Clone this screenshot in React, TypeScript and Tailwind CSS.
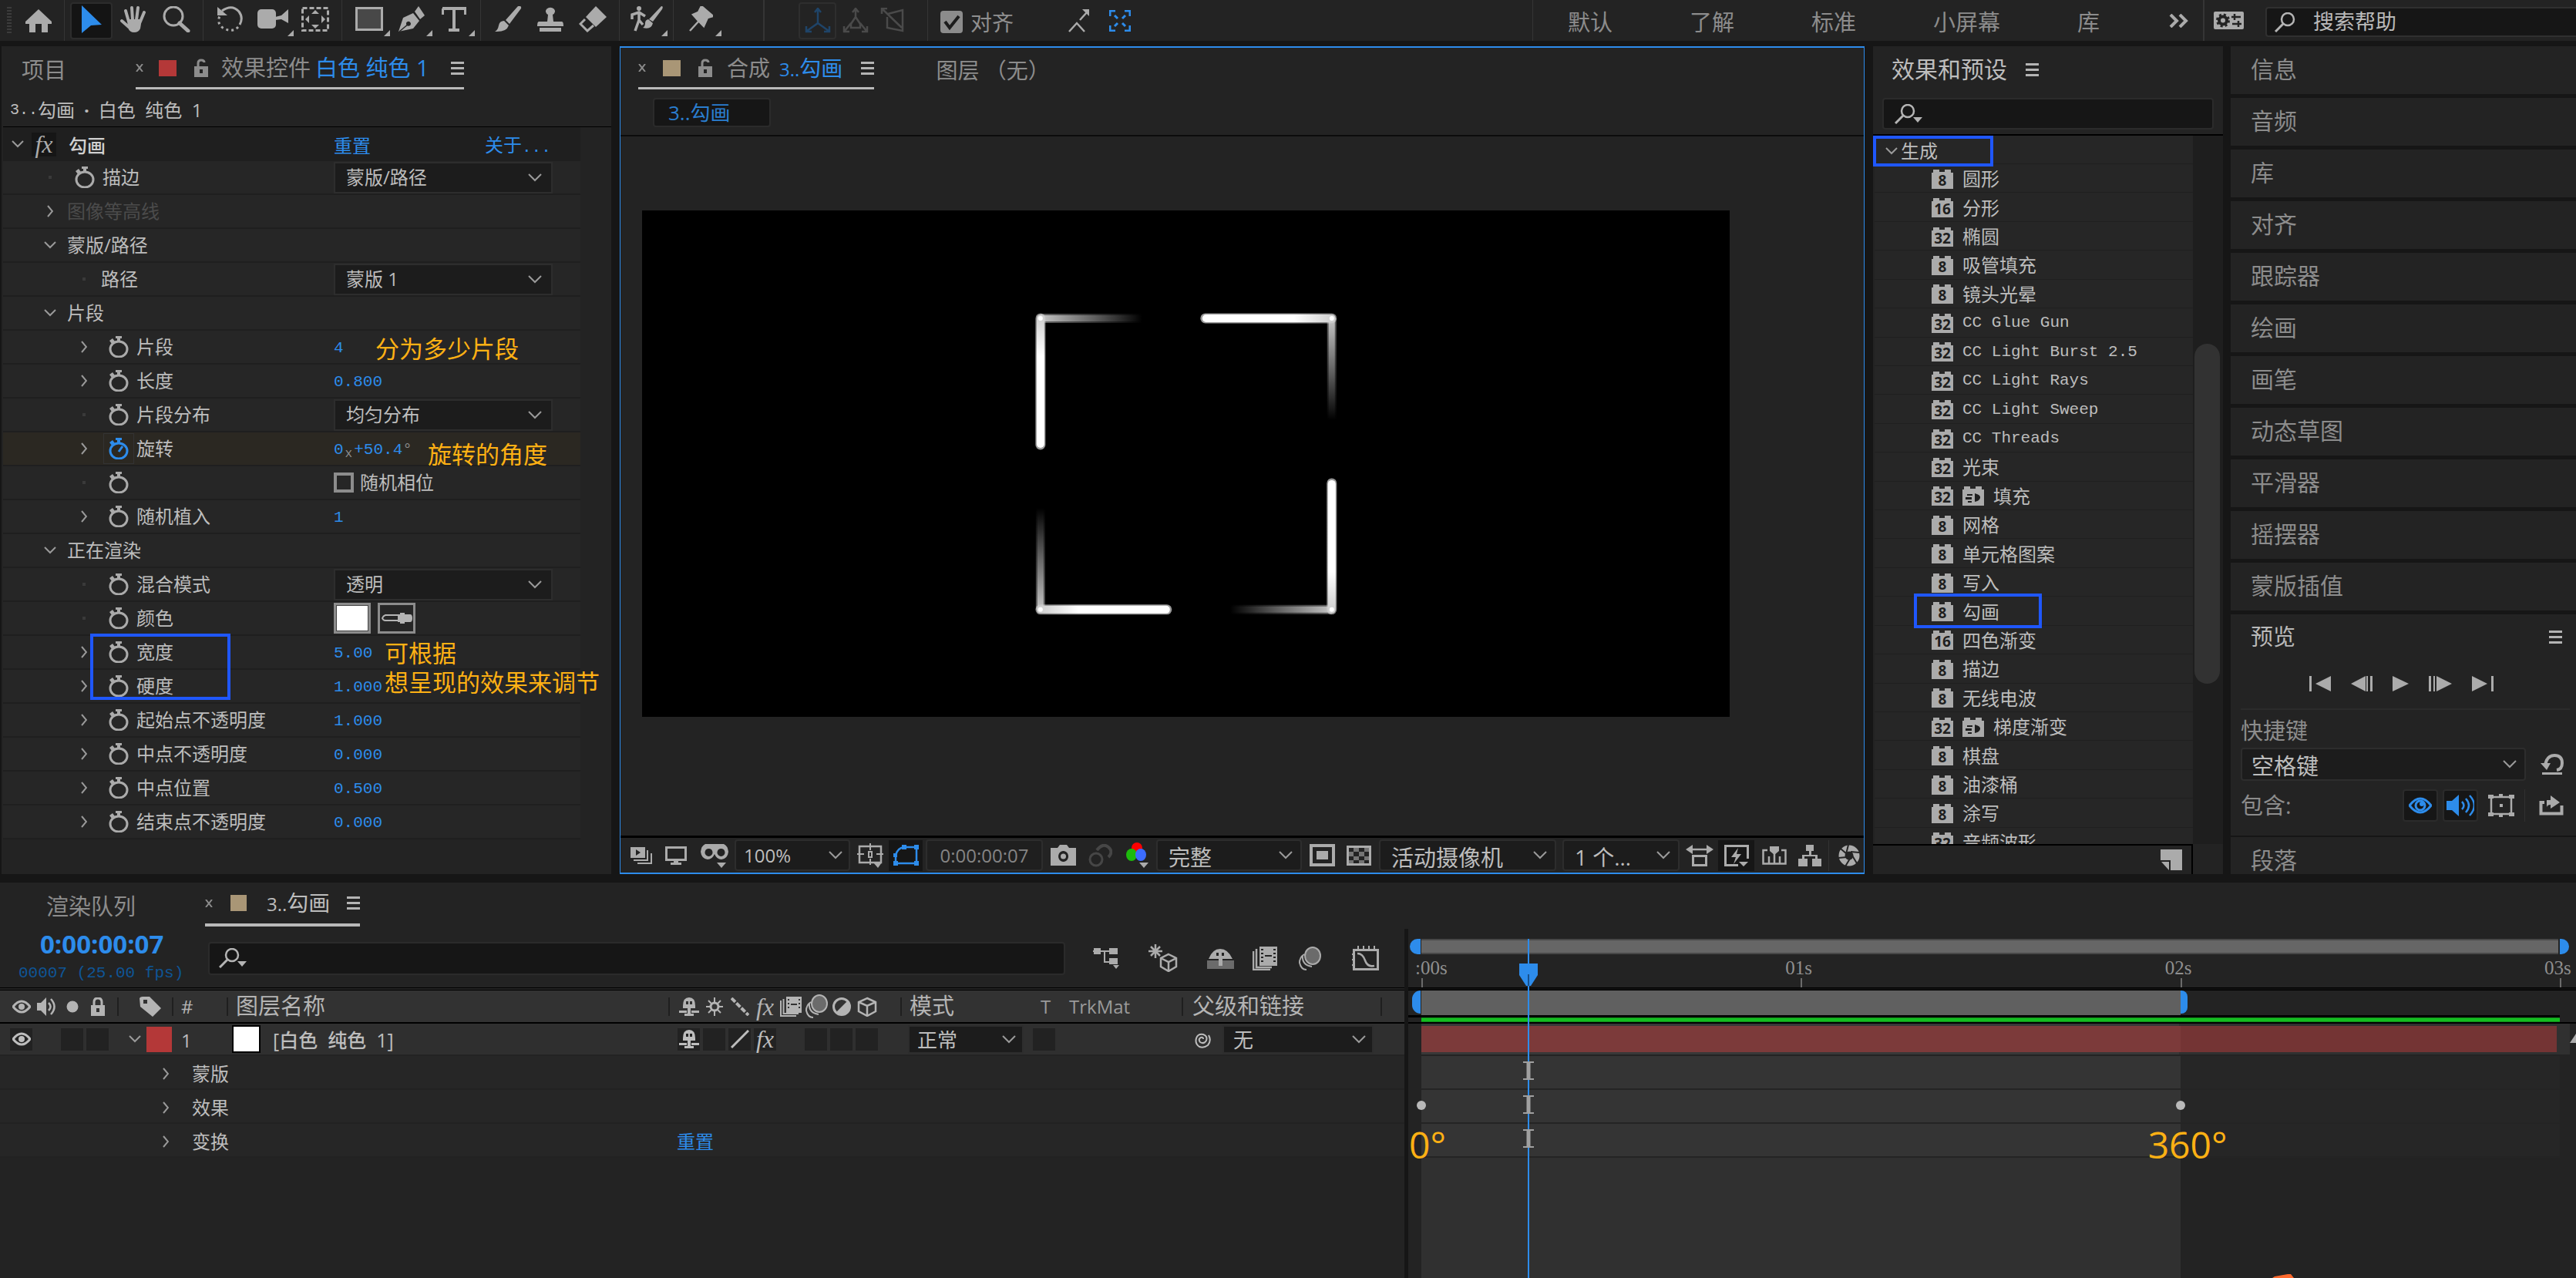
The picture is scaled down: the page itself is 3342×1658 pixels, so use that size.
import { Fragment } from 'react';
import type { ReactNode } from 'react';
import clsx from 'clsx';

const MONO = "font-['Liberation_Mono','Noto_Sans_CJK_SC',monospace]";

/* ---------- icons ---------- */

type IconProps = { w: number; h: number; children: ReactNode; className?: string };

const Icon = ({ w, h, children, className }: IconProps) => (
  <svg width={w} height={h} viewBox={`0 0 ${w} ${h}`} fill="currentColor" aria-hidden="true" className={clsx('shrink-0', className)}>
    {children}
  </svg>
);

const line = { fill: 'none', stroke: 'currentColor', strokeWidth: 2 } as const;

const ChevronDown = ({ className }: { className?: string }) => (
  <Icon w={18} h={11} className={className}><path d="M1 1 9 9 17 1" {...line} /></Icon>
);
const Twirl = ({ open }: { open?: boolean }) =>
  open
    ? <Icon w={16} h={10} className="text-[#9a9a9a]"><path d="M1 1 8 8 15 1" {...line} /></Icon>
    : <Icon w={8} h={16} className="text-[#9a9a9a]"><path d="M1 1 7 8 1 15" {...line} /></Icon>;

const Stopwatch = ({ on }: { on?: boolean }) => (
  <Icon w={26} h={28}>
    <ellipse cx="13" cy="17" rx="11" ry="10" {...line} strokeWidth={3} />
    <path d="M9 0h8v3h-2v4h-4V3H9zM1 6l4-3 3 4-4 3z" />
    {on && <path d="M13 18 18 11" {...line} strokeWidth={3} />}
  </Icon>
);
const Lock = ({ open }: { open?: boolean }) => (
  <Icon w={20} h={24}>
    <path d={open ? 'M6 11V6q0-4 4-4t4 3' : 'M5 11V6q0-5 5-5t5 5v5'} {...line} strokeWidth={3} />
    <path fillRule="evenodd" d="M1 10h18v14H1zM8 14h4v5H8z" />
  </Icon>
);
const Burger = () => (
  <Icon w={17} h={17} className="text-[#b4b4b4]"><path d="M0 0h17v3H0zM0 7h17v3H0zM0 14h17v3H0z" /></Icon>
);
const Cross = () => <Icon w={10} h={10} className="text-[#8c8c8c]"><path d="M1 0 9 10M9 0 1 10" {...line} /></Icon>;
const Corner = () => <Icon w={8} h={8} className="absolute right-0 bottom-1"><path d="M8 0V8H0z" /></Icon>;

const Search = ({ menu }: { menu?: boolean }) => (
  <Icon w={38} h={26} className="text-[#b4b4b4]">
    <ellipse cx="17" cy="9" rx="8" ry="8" {...line} strokeWidth={2.5} />
    <path d="M11 15 1 25" {...line} strokeWidth={3} />
    {menu && <path d="M24 17h12l-6 7z" />}
  </Icon>
);
const Eye = () => (
  <Icon w={24} h={18}>
    <path d="M1 9Q12-5 23 9 12 23 1 9z" {...line} strokeWidth={3} />
    <circle cx="12" cy="9" r="4" />
  </Icon>
);
const Speaker = ({ wide }: { wide?: boolean }) => (
  <Icon w={wide ? 36 : 26} h={wide ? 28 : 24}>
    <path d={wide ? 'M0 8h7L16 0V28L7 20H0z' : 'M0 7h5L12 0V24L5 17H0z'} />
    <path d={wide ? 'M20 9q5 5 0 10M25 5q8 9 0 18M30 1q12 13 0 26' : 'M15 7q5 5 0 10M18 2q9 10 0 20'} {...line} strokeWidth={2.5} />
  </Icon>
);
const Shy = () => (
  <Icon w={28} h={24}>
    <path fillRule="evenodd" d="M6 11Q6 0 14 0t8 11v3H6zM10 5v4h3V5zM15 5v4h3V5z" />
    <path d="M12 13h4v10h-4zM1 17h10v3H1zM17 17h10v3H17zM8 21h12v3H8z" />
  </Icon>
);
const Sun = () => (
  <Icon w={22} h={24}>
    <circle cx="11" cy="12" r="5" {...line} strokeWidth={3} />
    <path d="M11 0v6M11 18v6M0 12h5M17 12h5M3 4l4 4M15 16l4 4M19 4l-4 4M7 16l-4 4" {...line} />
  </Icon>
);
const Fx = () => <span aria-hidden="true" className="font-['Liberation_Serif',serif] text-[32px] leading-7 italic">fx</span>;
const Film = () => (
  <Icon w={32} h={31}>
    <path fillRule="evenodd" d="M9 0h23v25H9zM11 3v2h3V3zM11 8v2h3V8zM11 13v2h3v-2zM11 18v2h3v-2zM27 3v2h3V3zM27 8v2h3V8zM27 13v2h3v-2zM27 18v2h3v-2zM16 11v2h9v-2z" />
    <path d="M1 6v24h22M5 3v24h20" {...line} strokeWidth={2.5} />
  </Icon>
);
const Blur = () => (
  <Icon w={30} h={31}>
    <path d="M8 10q-6 4-6 11 2 9 9 9M6 12q-1 12 12 14" {...line} />
    <ellipse cx="19" cy="12" rx="10" ry="11" fill="#6b6b6b" stroke="currentColor" strokeWidth="2" />
  </Icon>
);
const Half = () => (
  <Icon w={24} h={24}>
    <circle cx="12" cy="12" r="10.500" {...line} strokeWidth={3} />
    <path d="M20 4A11 11 0 0 1 4 20z" />
  </Icon>
);
const Cube = () => (
  <Icon w={26} h={26}>
    <path d="M13 2 24 7v12l-11 6L2 19V7zM2 7l11 5 11-5M13 12v13" {...line} strokeWidth={2.500} />
  </Icon>
);

/* ---------- shared pieces ---------- */

type PickerProps = { label: string; options: string[]; className?: string; chevron?: string; pad?: string };

const Picker = ({ label, options, className, chevron = 'right-3', pad = 'pl-3.5' }: PickerProps) => (
  <span className={clsx('relative flex items-center border-2 border-[#2d2d2d] bg-[#1c1c1c]', className)}>
    <select aria-label={label} className={clsx('h-full w-full appearance-none truncate bg-transparent pr-8 text-[#bdbdbd] outline-none', pad)}>
      {options.map(o => <option key={o}>{o}</option>)}
    </select>
    <ChevronDown className={clsx('pointer-events-none absolute text-[#9a9a9a]', chevron)} />
  </span>
);

const Note = ({ children, className }: { children: ReactNode; className: string }) => (
  <p className={clsx('pointer-events-none absolute text-[31px] leading-9 whitespace-nowrap text-[#ffb114]', className)}>{children}</p>
);

/* ---------- top toolbar ---------- */

type Tool = { name: string; icon: ReactNode; menu?: boolean; active?: boolean };

const TOOL_GROUPS: Tool[][] = [
  [
    { name: '选取工具', active: true, icon: <Icon w={27} h={36} className="text-[#2d8ceb]"><path d="M1 0 27 25 13 26 1 36z" /></Icon> },
    {
      name: '手形工具',
      icon: (
        <Icon w={36} h={34}>
          <path d="M11 20 7 6M16 18 15 2M21 18 23 2M26 20 31 8M11 27 2 19" {...line} strokeWidth={4} strokeLinecap="round" />
          <path d="M9 17h19l-2 12q-2 5-8 5t-8-6z" />
        </Icon>
      ),
    },
    {
      name: '缩放工具',
      icon: <Icon w={36} h={34}><ellipse cx="14" cy="13" rx="12" ry="12" {...line} strokeWidth={3} /><path d="M22 22 33 32" {...line} strokeWidth={5} strokeLinecap="round" /></Icon>,
    },
  ],
  [
    {
      name: '旋转工具',
      icon: (
        <Icon w={36} h={34}>
          <path d="M7 6Q20-3 29 7q6 8 1 17" {...line} strokeWidth={3} />
          <path d="M28 27Q20 35 8 28 0 22 4 13" {...line} strokeWidth={3} strokeDasharray="3 4" />
          <path d="M1 1 14 12H1z" />
        </Icon>
      ),
    },
    {
      name: '统一摄像机工具',
      menu: true,
      icon: <Icon w={40} h={26}><rect width="24" height="25" rx="5" /><path d="M23 10 31 8 40 0V18L31 13 23 14z" /></Icon>,
    },
    {
      name: '向后平移工具',
      icon: (
        <Icon w={36} h={32}>
          <rect x="1.500" y="1.500" width="33" height="29" {...line} strokeWidth={3} strokeDasharray="6 3" />
          <path d="M18 4l5 5H13zM18 28l5-5H13zM5 16l5-5v10zM31 16l-5-5v10z" />
        </Icon>
      ),
    },
  ],
  [
    { name: '矩形工具', menu: true, icon: <Icon w={36} h={31}><rect x="1.500" y="1.500" width="33" height="28" fill="#484848" stroke="currentColor" strokeWidth="3" /></Icon> },
    {
      name: '钢笔工具',
      menu: true,
      icon: (
        <Icon w={34} h={34}>
          <path fillRule="evenodd" d="M0 33 6 15 19 9l8 10-8 10zM12 20a3 3 0 1 0 4 3 3 3 0 0 0-4-3z" />
          <path d="M21 7 26 0l8 12-6 5z" />
          <path d="M1 33 13 23" stroke="#232323" strokeWidth="1.500" />
        </Icon>
      ),
    },
    {
      name: '横排文字工具',
      menu: true,
      icon: <Icon w={32} h={32}><path d="M1 2h30v8M1 10V2M16 2v27M9 30h14" {...line} strokeWidth={4} /></Icon>,
    },
  ],
  [
    {
      name: '画笔工具',
      icon: <Icon w={36} h={34}><path d="M31 0q5-1 4 3L20 23l-5-5zM13 19l6 6q-3 9-18 8 4-2 5-8t7-6z" /></Icon>,
    },
    {
      name: '仿制图章工具',
      icon: <Icon w={34} h={32}><path d="M14 10a6 5 0 1 1 6 0l1 9h11q2 0 2 6H0q0-6 2-6h11zM3 27h28v5H3z" /></Icon>,
    },
    {
      name: '橡皮擦工具',
      icon: <Icon w={36} h={34}><path d="M22 0 36 14 22 27 9 14z" /><path d="M8 17 2 23l9 9 8-7" {...line} strokeWidth={3} /></Icon>,
    },
  ],
  [
    {
      name: 'Roto 笔刷工具',
      menu: true,
      icon: (
        <Icon w={42} h={34}>
          <circle cx="11" cy="3" r="3" />
          <path d="M11 7v12M2 17V11l9-3 8 5M11 18 6 32M11 18l5 6" {...line} strokeWidth={3.500} />
          <path d="M40 0q3 0 1 4L29 20l-5-3zM23 17l6 5q-2 9-13 6 3-2 3-6t4-5z" />
        </Icon>
      ),
    },
  ],
];

const PIN: Tool = {
  name: '人偶位置控点工具',
  menu: true,
  icon: <Icon w={32} h={34}><path d="M17 0 32 13 25 15 20 26 13 19 6 11 13 8zM13 20 2 32" stroke="currentColor" strokeWidth="2.500" /></Icon>,
};

const ToolButton = ({ tool }: { tool: Tool }) => (
  <button
    type="button"
    aria-label={tool.name}
    className={clsx('relative flex h-12 w-[55px] items-center justify-center pb-1', tool.active && 'rounded border-2 border-[#2c2c2c] bg-[#141414]')}
  >
    {tool.icon}
    {tool.menu && <Corner />}
  </button>
);

const AXES: { name: string; tone: string; d: string }[] = [
  { name: '本地轴模式', tone: 'text-[#1f4468]', d: 'M17 2V20L3 30M17 20 31 30M13 6l4-5 4 5M2 24v7h7M25 31h7v-7' },
  { name: '世界轴模式', tone: 'text-[#4a4a4a]', d: 'M17 2V14M11 20 3 30M23 20l8 10M13 6l4-5 4 5M2 24v7h7M25 31h7v-7M17 12l-6 9v5h12v-5z' },
  { name: '视图轴模式', tone: 'text-[#4a4a4a]', d: 'M3 2 28 26M2 8V1h7M10 8 29 3V30L9 26V12' },
];

const WORKSPACES = ['默认', '了解', '标准', '小屏幕', '库'];

const Toolbar = () => (
  <header className="flex h-[53px] items-center overflow-hidden bg-[#232323] text-[#ababab]">
    <div className="flex h-full w-[84px] shrink-0 items-center border-r border-[#353535] pl-[9px]">
      <span className="h-9 w-1.5 bg-[repeating-linear-gradient(#3c3c3c_0_2px,transparent_2px_4px)]" />
      <button type="button" aria-label="主页" className="ml-[18px]">
        <Icon w={34} h={30}><path d="M17 0 34 16v3H29V30H21V19H13V30H5V19H0V16z" /></Icon>
      </button>
    </div>
    {TOOL_GROUPS.map((g, i) => (
      <div key={i} className="flex h-full items-center border-r border-[#353535] px-[7px]">
        {g.map(t => <ToolButton key={t.name} tool={t} />)}
      </div>
    ))}
    <div className="flex h-full w-[118px] shrink-0 items-center border-r-2 border-[#353535] pl-[7px]"><ToolButton tool={PIN} /></div>
    <div className="ml-[44px] flex items-center">
      {AXES.map((a, i) => (
        <button key={a.name} type="button" aria-label={a.name} className={clsx('flex h-12 w-[49px] items-center justify-center', a.tone, i === 0 && 'rounded border-2 border-[#2e2e2e]')}>
          <Icon w={34} h={33}><path d={a.d} {...line} strokeWidth={2.500} /></Icon>
        </button>
      ))}
    </div>
    <label className="ml-5 flex h-full items-center gap-2.5 border-l border-[#353535] pt-1 pl-4 text-[28px]">
      <span className="relative flex">
        <input type="checkbox" defaultChecked className="h-[29px] w-[29px] appearance-none rounded-sm bg-[#8c8c8c]" />
        <Icon w={29} h={29} className="pointer-events-none absolute inset-0 text-[#1c1c1c]"><path d="M6 14 12 22 24 7" {...line} strokeWidth={4} /></Icon>
      </span>
      <span className="text-[#8f8f8f]">对齐</span>
    </label>
    <button type="button" aria-label="对齐选项" className="ml-[70px]">
      <Icon w={28} h={30}><path d="M19 0h9v9z" /><path d="M25 4 16 14M2 29 12 18 22 29" {...line} strokeWidth={2.500} /></Icon>
    </button>
    <button type="button" aria-label="捕捉" className="ml-[26px] text-[#2d8ceb]">
      <Icon w={28} h={28}>
        <path d="M1 8V1h7M20 1h7v7M27 20v7h-7M8 27H1v-7" {...line} strokeWidth={3} />
        <path d="M7 7 11 11M21 7 17 11M7 21 11 17M21 21 17 17" {...line} strokeWidth={3} />
      </Icon>
    </button>
    <nav className="ml-auto flex h-full items-center gap-[100px] border-l border-[#353535] pt-1 pl-[45px] text-[29px] text-[#8c8c8c]">
      {WORKSPACES.map(w => <button key={w} type="button">{w}</button>)}
    </nav>
    <button type="button" aria-label="更多工作区" className="ml-[90px] pr-[19px]">
      <Icon w={25} h={18}><path d="M2 1 10 9 2 17M14 1 22 9 14 17" {...line} strokeWidth={4} /></Icon>
    </button>
    <div className="flex h-full items-center border-l-2 border-[#353535] pl-3">
      <button type="button" aria-label="工作区设置">
        <Icon w={39} h={23}>
          <rect width="39" height="23" rx="2" />
          <circle cx="12" cy="11.500" r="5" fill="none" stroke="#232323" strokeWidth="4" />
          <circle cx="12" cy="11.500" r="7.500" fill="none" stroke="#232323" strokeWidth="3" strokeDasharray="3 3" />
          <path d="M23 7h12M24 16h12M27 3v8M32 12v8" stroke="#232323" strokeWidth="2.500" />
        </Icon>
      </button>
    </div>
    <label className="mt-1 ml-7 flex h-[39px] w-[403px] shrink-0 items-center gap-3 rounded-l border-2 border-r-0 border-[#303030] bg-[#161616] pl-2.5">
      <Search />
      <input aria-label="搜索帮助" placeholder="搜索帮助" className="w-full bg-transparent text-[27px] outline-none placeholder:text-[#b9b9b9]" />
    </label>
  </header>
);

/* ---------- effect controls ---------- */

type Prop = {
  name: string;
  level: 1 | 2;
  twirl?: 'open' | 'closed';
  watch?: boolean;
  keyed?: boolean;
  value?: string;
  options?: string[];
  dim?: boolean;
  control?: 'phase' | 'color';
};

const PROPS: Prop[] = [
  { name: '描边', level: 1, watch: true, options: ['蒙版/路径', '图像等高线'] },
  { name: '图像等高线', level: 1, twirl: 'closed', dim: true },
  { name: '蒙版/路径', level: 1, twirl: 'open' },
  { name: '路径', level: 2, options: ['蒙版 1'] },
  { name: '片段', level: 1, twirl: 'open' },
  { name: '片段', level: 2, twirl: 'closed', watch: true, value: '4' },
  { name: '长度', level: 2, twirl: 'closed', watch: true, value: '0.800' },
  { name: '片段分布', level: 2, watch: true, options: ['均匀分布', '成簇分布'] },
  { name: '旋转', level: 2, twirl: 'closed', watch: true, keyed: true, value: '+50.4' },
  { name: '', level: 2, watch: true, control: 'phase' },
  { name: '随机植入', level: 2, twirl: 'closed', watch: true, value: '1' },
  { name: '正在渲染', level: 1, twirl: 'open' },
  { name: '混合模式', level: 2, watch: true, options: ['透明', '上面', '下面', '模板'] },
  { name: '颜色', level: 2, watch: true, control: 'color' },
  { name: '宽度', level: 2, twirl: 'closed', watch: true, value: '5.00' },
  { name: '硬度', level: 2, twirl: 'closed', watch: true, value: '1.000' },
  { name: '起始点不透明度', level: 2, twirl: 'closed', watch: true, value: '1.000' },
  { name: '中点不透明度', level: 2, twirl: 'closed', watch: true, value: '0.000' },
  { name: '中点位置', level: 2, twirl: 'closed', watch: true, value: '0.500' },
  { name: '结束点不透明度', level: 2, twirl: 'closed', watch: true, value: '0.000' },
];

const PropRow = ({ p }: { p: Prop }) => (
  <div className={clsx('flex h-11 items-center border-b-2 border-[#1f1f1f]', p.keyed ? 'bg-[#2b2822]' : 'bg-[#262626]')}>
    <div className={clsx('flex w-[429px] shrink-0 items-center', p.level === 1 ? 'pl-[49px]' : 'pl-[93px]')}>
      <span className="flex w-6 justify-center">
        {p.twirl ? <button type="button" aria-label={`展开 ${p.name}`} className="flex"><Twirl open={p.twirl === 'open'} /></button> : <span className="h-1 w-1 bg-[#3a3a3a]" />}
      </span>
      {p.watch && (
        <button
          type="button"
          aria-label={`时间变化秒表 ${p.name}`}
          className={clsx('ml-[13px] flex h-10 w-10 items-center justify-center', p.keyed ? 'border border-[#333] text-[#2d8ceb]' : 'text-[#ababab]')}
        >
          <Stopwatch on={p.keyed} />
        </button>
      )}
      <span className={clsx('whitespace-nowrap', p.watch ? 'ml-[3px]' : 'ml-2.5', p.dim && 'text-[#4b4b4b]')}>{p.name}</span>
    </div>
    {p.options && <Picker label={p.name} options={p.options} className="h-[41px] w-[284px]" />}
    {p.value && (
      <button type="button" className={clsx('pt-1 text-[21px] text-[#2d8ceb]', MONO)}>
        {p.keyed && <>0<sub className="px-0.5 text-base text-[#8c8c8c]">x</sub></>}
        {p.value}
        {p.keyed && <span className="text-[#8c8c8c]">°</span>}
      </button>
    )}
    {p.control === 'phase' && (
      <label className="flex items-center gap-2">
        <input type="checkbox" className="h-[26px] w-[26px] appearance-none border-4 border-[#8c8c8c]" />
        随机相位
      </label>
    )}
    {p.control === 'color' && (
      <div className="flex gap-[9px]">
        <button type="button" aria-label="颜色" className="h-10 w-12 border-4 border-[#8c8c8c] bg-white outline-1 -outline-offset-4 outline-[#444]" />
        <button type="button" aria-label="吸管" className="flex h-10 w-[49px] items-center justify-center border-[3px] border-[#8c8c8c] text-[#b4b4b4]">
          <Icon w={40} h={14}><path d="M22 3H5Q2 4 1 7 2 10 5 10H22" {...line} /><path d="M21 2h3V0h6v2h7q3 0 3 5t-3 5h-7v2h-6v-2h-3z" /></Icon>
        </button>
      </div>
    )}
  </div>
);

const EffectControls = () => (
  <section className="relative w-[791px] shrink-0 bg-[#232323] text-2xl text-[#bdbdbd]">
    <div className="flex h-14 items-end pl-[26px] text-[29px] leading-[50px]">
      <button type="button" className="text-[#8c8c8c]">项目</button>
      <div className="ml-[90px] flex items-center border-b-[3px] border-[#b9b9b9] whitespace-nowrap text-[#8c8c8c]">
        <button type="button" aria-label="关闭" className="mr-5"><Cross /></button>
        <span className="mr-[22px] h-[21px] w-[23px] bg-[#b43838]" />
        <Lock open />
        <span className="ml-4">效果控件</span>
        <span className="mr-7 ml-[6px] text-[#2d8ceb]">白色 纯色 1</span>
        <button type="button" aria-label="面板菜单"><Burger /></button>
      </div>
    </div>
    <p className="ml-0.5 flex h-[49px] items-center border-b border-black pt-1.5 pl-[9px]"><span className={clsx('text-xl', MONO)}>3..</span>勾画<span className="px-3 font-bold">·</span>白色&nbsp; 纯色&nbsp; 1</p>
    <div className="ml-0.5 w-[749px]">
      <div className="flex h-11 items-center bg-[#1f1f1f]">
        <span className="flex w-[37px] justify-center"><Twirl open /></span>
        <span className="flex h-[31px] w-8 items-center justify-center bg-[#161616] text-[#ababab]"><Fx /></span>
        <span className="ml-4 w-[344px] pt-1 font-medium text-[#d0d0d0]">勾画</span>
        <button type="button" className="w-[196px] pt-1 text-left text-[#2d8ceb]">重置</button>
        <button type="button" className="pt-1 text-[#2d8ceb]">关于<span className={clsx('text-[21px]', MONO)}>...</span></button>
      </div>
      {PROPS.map((p, i) => <PropRow key={i} p={p} />)}
    </div>
    <Note className="top-[374px] left-[485px]">分为多少片段</Note>
    <Note className="top-[511px] left-[553px]">旋转的角度</Note>
    <Note className="top-[769px] left-[497px]">可根据</Note>
    <Note className="top-[807px] left-[497px]">想呈现的效果来调节</Note>
    <span className="pointer-events-none absolute top-[762px] left-[115px] h-[86px] w-[182px] border-4 border-[#1f57ff]" />
  </section>
);

/* ---------- composition viewer ---------- */

const StrokeSegment = ({ turn }: { turn: number }) => (
  <g transform={`rotate(${turn} 706 329)`} fill="none" strokeLinecap="round">
    <path d="M895 140V272" stroke="url(#tail)" strokeWidth="12" strokeLinecap="butt" opacity=".5" />
    <path d="M895 140V272" stroke="url(#tail)" strokeWidth="8" strokeLinecap="butt" />
    <path d="M731 140H895" stroke="url(#head)" strokeWidth="13" opacity=".6" />
    <path d="M732 140H895" stroke="url(#head)" strokeWidth="10" />
    <circle cx="895" cy="140" r="3" fill="#fff" />
  </g>
);

const FooterIcon = ({ name, className, children }: { name: string; className: string; children: ReactNode }) => (
  <button type="button" aria-label={name} className={clsx('flex h-10 shrink-0 items-center justify-center', className)}>{children}</button>
);

const Viewer = () => (
  <section className="ml-[11px] flex min-w-0 flex-1 flex-col border border-y-2 border-[#2d8ceb] bg-[#232323]">
    <div className="flex h-[54px] items-end pl-[23px] text-[28px] leading-[50px] text-[#8c8c8c]">
      <div className="flex items-center border-b-[3px] border-[#b9b9b9] whitespace-nowrap">
        <button type="button" aria-label="关闭" className="mr-[22px]"><Cross /></button>
        <span className="mr-[22px] h-[21px] w-[23px] bg-[#a99676]" />
        <Lock open />
        <span className="ml-[18px]">合成</span>
        <span className="mr-6 ml-3 text-[#2d8ceb]"><span className="text-2xl">3..</span>勾画</span>
        <button type="button" aria-label="面板菜单"><Burger /></button>
      </div>
      <button type="button" className="ml-20">图层 （无）</button>
    </div>
    <div className="flex h-[61px] items-center border-b-2 border-[#0c0c0c] pl-[42px]">
      <button type="button" className="h-[38px] w-[153px] rounded border-2 border-[#2b2b2b] bg-[#161616] pl-[18px] text-left text-[26px] leading-[34px] text-[#2a7ed0]">3..勾画</button>
    </div>
    <div className="flex-1 pt-24 pl-7">
      <svg viewBox="0 0 1411 657" role="img" aria-label="合成预览" className="h-auto w-[89%] bg-black">
        <defs>
          <linearGradient id="head" gradientUnits="userSpaceOnUse" x1="731" y1="0" x2="895" y2="0">
            <stop offset=".7" stopColor="#fff" />
            <stop offset="1" stopColor="#d0d0d0" />
          </linearGradient>
          <linearGradient id="tail" gradientUnits="userSpaceOnUse" x1="0" y1="140" x2="0" y2="272">
            <stop offset="0" stopColor="#c4c4c4" />
            <stop offset=".5" stopColor="#666" />
            <stop offset="1" stopColor="#000" />
          </linearGradient>
        </defs>
        {[0, 90, 180, 270].map(t => <StrokeSegment key={t} turn={t} />)}
      </svg>
    </div>
    <footer className="flex h-12 items-center border-t-[3px] border-black pl-2 text-[#ababab]">
      <FooterIcon name="始终预览此视图" className="w-[38px]">
        <Icon w={28} h={22}><path fillRule="evenodd" d="M0 0h19v14H0zM7 3v8l6-4z" /><path d="M22 4v13H4M27 8v13H9" {...line} /></Icon>
      </FooterIcon>
      <FooterIcon name="主查看器" className="ml-2 w-9">
        <Icon w={28} h={24}><rect x="1.500" y="1.500" width="25" height="16" {...line} strokeWidth={3} /><path d="M11 18h6v3h4v3H7v-3h4z" /></Icon>
      </FooterIcon>
      <FooterIcon name="Adobe 沉浸式环境" className="ml-3.5 w-9">
        <Icon w={36} h={32}><path fillRule="evenodd" d="M6 1h24q5 2 6 10-1 9-9 10-6 0-9-7-3 7-9 7-8-1-9-10Q1 3 6 1zM10 7a5 5 0 1 0 1 0zM26 7a5 5 0 1 0 1 0z" /><path d="M21 25h12l-6 7z" /></Icon>
      </FooterIcon>
      <Picker label="放大率" options={['100%', '50%', '200%']} className="ml-2 h-[41px] w-[150px] rounded text-2xl" chevron="right-2" pad="pl-2.5" />
      <FooterIcon name="网格和参考线" className="ml-2 w-9">
        <Icon w={34} h={32}><rect x="3" y="4" width="28" height="21" {...line} strokeWidth={2.500} /><path d="M17 0v9M17 20v8M0 14h9M25 14h9M15 11h4v7h-4z" {...line} /><path d="M21 25h11l-5 7z" /></Icon>
      </FooterIcon>
      <FooterIcon name="蒙版可见性" className="ml-1.5 w-11 bg-[#161616] text-[#2d8ceb]">
        <Icon w={33} h={29}><path d="M3 25V15Q5 5 14 4H30V25z" {...line} strokeWidth={2.500} /><path d="M11 1h6v6h-6zM27 1h6v6h-6zM0 22h6v6H0zM27 22h6v6h-6zM0 12h5v5H0z" /></Icon>
      </FooterIcon>
      <button type="button" className="ml-1 h-[41px] w-[152px] rounded border-2 border-[#2d2d2d] bg-[#1f1f1f] text-2xl leading-8 text-[#848484]">0:00:00:07</button>
      <FooterIcon name="快照" className="ml-2 w-9">
        <Icon w={33} h={27}><path fillRule="evenodd" d="M0 4h9l3-4h9l3 4h9v23H0zM16.500 8a6.500 7 0 1 0 .1 0z" /><circle cx="16.500" cy="15" r="3.500" /></Icon>
      </FooterIcon>
      <FooterIcon name="显示快照" className="ml-[11px] w-9 text-[#464646]">
        <Icon w={34} h={30}><circle cx="13" cy="20" r="8" {...line} strokeWidth={3} /><path d="M14 8q8-10 15-4t0 13" {...line} strokeWidth={4} /></Icon>
      </FooterIcon>
      <FooterIcon name="通道" className="ml-4 w-8">
        <Icon w={32} h={33}><ellipse cx="15" cy="7" rx="7" ry="7" fill="#f00" /><ellipse cx="8" cy="16" rx="7" ry="8" fill="#1dbb0c" /><ellipse cx="20" cy="16" rx="7" ry="8" fill="#3c6cff" /><path d="M18 26h12l-6 7z" /></Icon>
      </FooterIcon>
      <Picker label="分辨率" options={['完整', '二分之一', '四分之一']} className="ml-2 h-[41px] w-[189px] rounded text-[28px]" chevron="right-2.5" />
      <FooterIcon name="目标区域" className="ml-2 w-9">
        <Icon w={33} h={29}><rect x="2" y="2" width="29" height="25" {...line} strokeWidth={4} /><rect x="9" y="9" width="15" height="11" /></Icon>
      </FooterIcon>
      <FooterIcon name="透明网格" className="ml-3 w-9">
        <Icon w={32} h={26}>
          <rect x="1.500" y="1.500" width="29" height="23" {...line} strokeWidth={3} />
          <path d="M9 3h7v5H9zM23 3h7v5h-7zM3 8h6v6H3zM16 8h7v6h-7zM9 14h7v5H9zM23 14h7v5h-7zM3 19h6v5H3zM16 19h7v5h-7z" opacity=".6" />
        </Icon>
      </FooterIcon>
      <Picker label="3D 视图" options={['活动摄像机', '正面', '自定义视图 1']} className="ml-2 h-[41px] w-[230px] rounded text-[29px]" chevron="right-2.5" />
      <Picker label="视图布局" options={['1 个…', '2 个视图', '4 个视图']} className="ml-2 h-[41px] w-[152px] rounded text-[28px]" chevron="right-2.5" />
      <FooterIcon name="像素长宽比校正" className="ml-2 w-9">
        <Icon w={36} h={28}><path d="M4 6h28" stroke="currentColor" strokeWidth="2.500" /><path d="M0 6 9 0v12zM36 6l-9-6v12z" /><rect x="9.500" y="14.500" width="17" height="12" {...line} strokeWidth={3} /></Icon>
      </FooterIcon>
      <FooterIcon name="快速预览" className="ml-1.5 w-[47px] bg-[#161616]">
        <Icon w={32} h={28}><path d="M18 26.500H1.500v-25h29V18" {...line} strokeWidth={3} /><path d="M18 4 9 16h6l-3 9 10-13h-6zM19 22h12l-6 6z" /></Icon>
      </FooterIcon>
      <FooterIcon name="时间轴" className="ml-2 w-9">
        <Icon w={32} h={24}><path d="M7 5H1.500v17.500h29V5H25M9 22V13M16 22V6M23 22V13" {...line} strokeWidth={2.500} /><path d="M10 0h12v6l-6 5-6-5z" /></Icon>
      </FooterIcon>
      <FooterIcon name="合成流程图" className="ml-2.5 w-9">
        <Icon w={30} h={28}><path d="M10 0h10v8H10zM0 18h12v10H0zM18 18h12v10H18zM14 8h3v5h8v5h-3v-3H8v3H5v-5h9z" /></Icon>
      </FooterIcon>
      <span className="ml-1.5 h-10 w-px bg-[#333]" />
      <FooterIcon name="重置曝光度" className="ml-2.5 w-8">
        <Icon w={28} h={28}><circle cx="14" cy="14" r="9.500" {...line} strokeWidth={8} /><path d="M13 0 10 12M27 10 16 9M24 24 18 14M9 28 15 18M0 17l11-1M3 5l8 7" stroke="#232323" strokeWidth="2" /></Icon>
      </FooterIcon>
    </footer>
  </section>
);

/* ---------- effects & presets ---------- */

type Effect = { bits: '8' | '16' | '32'; name: string; gpu?: boolean; latin?: boolean };

const EFFECTS: Effect[] = [
  { bits: '8', name: '圆形' },
  { bits: '16', name: '分形' },
  { bits: '32', name: '椭圆' },
  { bits: '8', name: '吸管填充' },
  { bits: '8', name: '镜头光晕' },
  { bits: '32', name: 'CC Glue Gun', latin: true },
  { bits: '32', name: 'CC Light Burst 2.5', latin: true },
  { bits: '32', name: 'CC Light Rays', latin: true },
  { bits: '32', name: 'CC Light Sweep', latin: true },
  { bits: '32', name: 'CC Threads', latin: true },
  { bits: '32', name: '光束' },
  { bits: '32', name: '填充', gpu: true },
  { bits: '8', name: '网格' },
  { bits: '8', name: '单元格图案' },
  { bits: '8', name: '写入' },
  { bits: '8', name: '勾画' },
  { bits: '16', name: '四色渐变' },
  { bits: '8', name: '描边' },
  { bits: '8', name: '无线电波' },
  { bits: '32', name: '梯度渐变', gpu: true },
  { bits: '8', name: '棋盘' },
  { bits: '8', name: '油漆桶' },
  { bits: '8', name: '涂写' },
  { bits: '32', name: '音频波形' },
];

const Plug = ({ bits }: { bits?: string }) => (
  <Icon w={28} h={33} className="mr-3 text-[#ababab]">
    <path d="M2 4h8v3h7V4h8v4h3v21H0V8h2z" />
    {bits
      ? <text x="14" y="25" textAnchor="middle" fontSize="19" fontWeight="700" fill="#1f1f1f" fontFamily="Open Sans, sans-serif">{bits}</text>
      : <path d="M6 14h7v2H6zM4 18h8v3H4zM7 23h5v2H7zM16 13q8 2 7 6-1 4-7 5z" fill="#1f1f1f" />}
  </Icon>
);

const Presets = () => (
  <section className="relative ml-[11px] flex w-[454px] shrink-0 flex-col bg-[#232323] text-2xl text-[#bdbdbd]">
    <div className="flex h-[60px] items-center pl-6 text-[30px]">
      <h2>效果和预设</h2>
      <button type="button" aria-label="面板菜单" className="ml-6"><Burger /></button>
    </div>
    <label className="mx-3 mt-[7px] flex h-[41px] items-center rounded border-2 border-[#2b2b2b] bg-[#161616] pl-3.5">
      <Search menu />
      <input aria-label="搜索效果" className="w-full bg-transparent outline-none" />
    </label>
    <div className="mt-1.5 flex min-h-0 flex-1 overflow-hidden border-t-2 border-black">
      <div className="h-0 flex-1 pl-0.5">
        <button type="button" className="flex h-9 w-full items-center gap-1 bg-[#262626] pt-1 pl-3.5 whitespace-nowrap"><Twirl open />生成</button>
        <ul className="flex h-[898px] flex-col">
          {EFFECTS.map(e => (
            <li key={e.name} className="flex min-h-0 flex-1 items-center border-t border-[#1f1f1f] bg-[#262626] pt-0.5 pl-[74px] whitespace-nowrap">
              <Plug bits={e.bits} />
              {e.gpu && <Plug />}
              <span className={clsx('leading-8', e.latin && ['text-[21px]', MONO])}>{e.name}</span>
            </li>
          ))}
        </ul>
      </div>
      <div className="w-[39px] bg-[#1e1e1e] pt-[270px] pl-0.5">
        <div className="h-[441px] w-[33px] rounded-full bg-[#323232]" />
      </div>
    </div>
    <div className="flex h-[39px] w-[415px] items-center justify-end border-t-2 border-r-2 border-black pr-3 text-[#ababab]">
      <button type="button" aria-label="新建动画预设"><Icon w={28} h={27}><path d="M0 0h28v27H13V14H0zM1 16h10v11z" /></Icon></button>
    </div>
    <span className="pointer-events-none absolute top-[116px] left-0 h-10 w-[156px] border-4 border-[#1f57ff]" />
    <span className="pointer-events-none absolute top-[710px] left-[53px] h-[45px] w-[166px] border-4 border-[#1f57ff]" />
  </section>
);

/* ---------- right column ---------- */

const PANELS = ['信息', '音频', '库', '对齐', '跟踪器', '绘画', '画笔', '动态草图', '平滑器', '摇摆器', '蒙版插值'];

const TRANSPORT: { name: string; w: number; d: string }[] = [
  { name: '第一帧', w: 28, d: 'M0 0h3v20H0zM28 0v20L8 10z' },
  { name: '上一帧', w: 28, d: 'M19 0v20L0 10zM20 0h2v20h-2zM25 0h3v20h-3z' },
  { name: '播放', w: 21, d: 'M0 0 21 10 0 20z' },
  { name: '下一帧', w: 30, d: 'M0 0h3v20H0zM6 0h2v20H6zM10 0 30 10 10 20z' },
  { name: '最后一帧', w: 28, d: 'M0 0 20 10 0 20zM25 0h3v20h-3z' },
];

const SidePanels = () => (
  <aside className="ml-2.5 flex w-[448px] shrink-0 flex-col text-[30px] text-[#8c8c8c]">
    {PANELS.map(p => (
      <button key={p} type="button" className="mb-[5px] h-[62px] bg-[#232323] pb-1 pl-[26px] text-left">{p}</button>
    ))}
    <div className="flex h-[287px] flex-col bg-[#232323] text-[29px]">
      <div className="flex h-[58px] shrink-0 items-center justify-between pr-[18px] pl-[26px] text-[#b9b9b9]">
        <h2>预览</h2>
        <button type="button" aria-label="面板菜单"><Burger /></button>
      </div>
      <div className="flex h-16 shrink-0 items-center justify-center gap-[26px] pr-1.5 text-[#ababab]">
        {TRANSPORT.map(t => (
          <button key={t.name} type="button" aria-label={t.name}><Icon w={t.w} h={20}><path d={t.d} /></Icon></button>
        ))}
      </div>
      <div className="mr-2 ml-[13px] border-t-2 border-[#2b2b2b]">
        <label htmlFor="shortcut" className="mt-1.5 block h-[43px] leading-[42px]">快捷键</label>
        <div className="flex items-center justify-between">
          <span className="relative flex h-[43px] w-[370px] items-center rounded border-2 border-[#2d2d2d] bg-[#1c1c1c]">
            <select id="shortcut" className="h-full w-full appearance-none bg-transparent pl-3 text-[#bdbdbd] outline-none">
              <option>空格键</option>
              <option>Shift+空格键</option>
            </select>
            <ChevronDown className="pointer-events-none absolute right-2.5 text-[#9a9a9a]" />
          </span>
          <button type="button" aria-label="重置" className="pr-2 text-[#ababab]">
            <Icon w={30} h={28}><path d="M6 15Q8 2 18 2t10 10q0 8-7 9" {...line} strokeWidth={4} /><path d="M0 12h13l-5 9zM2 24h26v3H2z" /></Icon>
          </button>
        </div>
        <div className="mt-2.5 flex items-center">
          <span className="mr-auto">包含:</span>
          <button type="button" aria-label="包含视频" className="mr-1.5 flex h-[42px] w-[46px] items-center justify-center rounded border-2 border-[#2b2b2b] bg-[#161616] text-[#2d8ceb]">
            <Icon w={30} h={22}><path d="M1 11Q15-7 29 11 15 29 1 11z" {...line} strokeWidth={3} /><circle cx="15" cy="11" r="6" {...line} strokeWidth={3} /><circle cx="17" cy="9" r="3" /></Icon>
          </button>
          <button type="button" aria-label="包含音频" className="flex h-[42px] w-[46px] items-center justify-center rounded border-2 border-[#2b2b2b] bg-[#161616] text-[#2d8ceb]"><Speaker wide /></button>
          <button type="button" aria-label="包含叠加" className="mx-[13px] text-[#ababab]">
            <Icon w={34} h={30}><rect x="4" y="4" width="26" height="22" {...line} strokeWidth={2.500} /><path d="M0 1h7v5H0zM27 1h7v5h-7zM0 24h7v5H0zM27 24h7v5h-7zM15 13h4v4h-4zM14 0h5v4h-5zM14 26h5v4h-5z" /></Icon>
          </button>
          <button type="button" aria-label="循环选项" className="border-l border-[#303030] py-2 pr-2 pl-[18px] text-[#ababab]">
            <Icon w={32} h={26}><path d="M7 9H2.500V23.500H29.500V13" {...line} strokeWidth={4} /><path d="M10 15V6h5V0L27 9 15 17v-5q-4 0-5 3z" /></Icon>
          </button>
        </div>
      </div>
    </div>
    <button type="button" className="mt-0.5 h-12 bg-[#232323] pt-3 pl-[26px] text-left leading-9">段落</button>
  </aside>
);

/* ---------- timeline ---------- */

const Box = ({ children, empty }: { children?: ReactNode; empty?: boolean }) => (
  <span className="flex w-[33px] justify-center">
    <span className={clsx('flex h-[29px] w-[29px] items-center justify-center', !empty && 'bg-[#222]')}>{children}</span>
  </span>
);
const Cell = ({ children, className }: { children?: ReactNode; className: string }) => (
  <div className={clsx('flex shrink-0 items-center', className)}>{children}</div>
);
const Divider = () => <span className="h-6 w-0.5 bg-[#1f1f1f]" />;

const SWITCHES: ReactNode[] = [
  <Shy />,
  <Sun />,
  <Icon w={24} h={24}><path d="M1 1 23 23" {...line} strokeWidth={4} strokeDasharray="7 2" /></Icon>,
  <Fx />,
  <Icon w={28} h={26}><path fillRule="evenodd" d="M8 0h20v21H8zM10 3v2h2V3zM10 8v2h2V8zM10 13v2h2v-2zM24 3v2h2V3zM24 8v2h2V8zM24 13v2h2v-2zM14 9v2h8V9z" /><path d="M1 5v20h20M4.500 3v19H24" {...line} /></Icon>,
  <Blur />,
  <Half />,
  <Cube />,
];

const Outline = () => (
  <div className="w-[1822px] shrink-0 text-2xl text-[#bdbdbd]">
    <div className="flex h-[76px] items-center">
      <div className="w-[270px] pl-6">
        <p className="pl-7 text-[33px] leading-9 font-bold text-[#2d8ceb]">0:00:00:07</p>
        <p className={clsx('pt-1 text-[21px] leading-8 text-[#0f5596]', MONO)}>00007 (25.00 fps)</p>
      </div>
      <label className="flex h-[43px] w-[1112px] items-center rounded border-2 border-[#2b2b2b] bg-[#161616] pl-3">
        <Search menu />
        <input aria-label="搜索图层" className="w-full bg-transparent outline-none" />
      </label>
      <div className="ml-[34px] flex items-center text-[#ababab]">
        <button type="button" aria-label="合成微型流程图" className="w-[74px]">
          <Icon w={36} h={28}><path d="M2 5h24M17 5v14h8" {...line} /><path d="M3 1h9v8H3zM23 1h11v8H23zM23 14h11v8H23zM28 23h8l-4 5z" /></Icon>
        </button>
        <button type="button" aria-label="草图 3D" className="w-[76px]">
          <Icon w={38} h={36}><path d="M26 13 36 18v11l-10 6-10-6V18zM16 18l10 5 10-5M26 23v12" {...line} strokeWidth={2.500} /><path d="M9 0v18M0 9h18M3 3l12 12M15 3 3 15" {...line} strokeWidth={2.500} /></Icon>
        </button>
        <button type="button" aria-label="隐藏消隐图层" className="w-[59px]">
          <Icon w={35} h={27}><path d="M0 16h35v11H0z" fill="#6b6b6b" /><path fillRule="evenodd" d="M2 14Q7 1 17 1t16 13zM12 6v4h3V6zM19 6v4h3V6z" /><path d="M15 13h5v10h-5z" /></Icon>
        </button>
        <button type="button" aria-label="帧混合" className="w-[59px]"><Film /></button>
        <button type="button" aria-label="运动模糊" className="w-[70px]"><Blur /></button>
        <button type="button" aria-label="图表编辑器">
          <Icon w={35} h={32}><rect x="2.500" y="5.500" width="31" height="25" {...line} strokeWidth={3} /><path d="M8 0v4M15 0v4M22 0v4M29 0v4M0 11h3M0 18h3M0 25h3" {...line} /><path d="M7 10q7 0 10 9t12 7" {...line} strokeWidth={2.500} /></Icon>
        </button>
      </div>
    </div>
    <div className="h-1 border-y border-black" />
    <div className="flex h-[43px] items-center border-b-2 border-black bg-[#323232] text-[#b4b4b4]">
      <Cell className="w-[152px] pl-[11px]">
        <Box empty><Eye /></Box>
        <Box empty><Speaker /></Box>
        <Box empty><Icon w={16} h={16}><circle cx="8" cy="8" r="7.500" /></Icon></Box>
        <Box empty><Lock /></Box>
      </Cell>
      <Divider />
      <Cell className="w-[69px] justify-center pl-3"><Icon w={28} h={26}><path fillRule="evenodd" d="M0 2Q1 0 4 0h9L28 15 17 26 1 13zM5 4v5h5V4z" /></Icon></Cell>
      <Divider />
      <Cell className="w-[69px] pl-2.5">#</Cell>
      <Divider />
      <Cell className="w-[571px] pl-2.5 text-[29px]">图层名称</Cell>
      <Divider />
      <Cell className="w-[299px] pl-2">{SWITCHES.map((s, i) => <Box key={i} empty>{s}</Box>)}</Cell>
      <Divider />
      <Cell className="w-[180px] pl-2.5 text-[29px]">模式</Cell>
      <Cell className="w-[37px] text-[#9a9a9a]">T</Cell>
      <Cell className="w-[146px] text-[#9a9a9a]">TrkMat</Cell>
      <Divider />
      <Cell className="w-[256px] pl-3 text-[29px]">父级和链接</Cell>
      <Divider />
    </div>
    <div className="flex h-[42px] items-center border-b-2 border-[#232323] bg-[#2f2f2f]">
      <Cell className="w-[163px] pl-[11px]"><Box><Eye /></Box><Box empty /><Box /><Box /></Cell>
      <Cell className="w-[27px] pl-1"><Twirl open /></Cell>
      <span className="h-[33px] w-[33px] bg-[#b43838]" />
      <span className="w-[78px] pt-1 pl-3 font-medium">1</span>
      <span className="h-9 w-[37px] border-2 border-black bg-white" />
      <span className="w-[539px] pt-1 pl-4 text-[25px] font-medium">[白色&nbsp; 纯色&nbsp; 1]</span>
      <Cell className="w-[301px]">
        <Box><Shy /></Box>
        <Box />
        <Box><Icon w={24} h={24}><path d="M1 23 23 1" {...line} strokeWidth={3} /></Icon></Box>
        <Box><Fx /></Box>
        <Box empty />
        <Box />
        <Box />
        <Box />
      </Cell>
      <Cell className="w-[368px]">
        <Picker label="模式" options={['正常', '相加', '屏幕']} className="h-[37px] w-[150px] text-[26px]" chevron="right-2" pad="pl-2.5" />
        <span className="ml-3 h-[29px] w-[29px] bg-[#222]" />
      </Cell>
      <Icon w={26} h={26}><path d="M15 13q0-3-3-2-4 2-1 6 5 3 8-2 2-6-4-8-7-1-9 5-2 7 4 11 6 2 11-2 5-6 1-13" {...line} strokeWidth={2} /></Icon>
      <Picker label="父级和链接" options={['无']} className="ml-3.5 h-[37px] w-[196px] text-[26px]" chevron="right-2" pad="pl-3" />
    </div>
    {['蒙版', '效果', '变换'].map(n => (
      <div key={n} className="flex h-11 items-center border-b-2 border-[#222] bg-[#262626] pt-1 pl-[211px]">
        <Twirl />
        <span className="w-[659px] pl-[30px]">{n}</span>
        {n === '变换' && <button type="button" className="text-[#2d8ceb]">重置</button>}
      </div>
    ))}
  </div>
);

const SECONDS = [':00s', '01s', '02s', '03s'];
const FRAME = 7 / 75;

const IBeam = () => (
  <Icon w={14} h={24} className="text-[#a0a0a0]"><path d="M0 1h14M0 23h14" {...line} /><path d="M7 1v22" {...line} strokeWidth={5} /></Icon>
);

const Tracks = () => (
  <div className="relative flex min-w-0 flex-1 flex-col overflow-hidden border-l-[5px] border-[#161616] bg-[#232323] pr-[21px] pl-[17px]">
    <div className="relative flex flex-1 flex-col">
      <div className="-mr-3 -ml-[15px] flex h-[33px] items-end">
        <span className="mr-px h-5 w-3.5 rounded-l-full bg-[#2d8ceb]" />
        <span className="h-5 flex-1 border-y-2 border-[#484848] bg-[#666]" />
        <span className="ml-0.5 h-5 w-3 rounded-r-full bg-[#2d8ceb]" />
      </div>
      <div className="relative h-[43px] font-['Liberation_Serif',serif] text-[25px] text-[#8f8f8f]">
        {SECONDS.map((s, i) => (
          <Fragment key={s}>
            <span className={clsx('absolute top-1 leading-7', i === 0 ? '-ml-2' : '-ml-5')} style={{ left: `${(i * 100) / 3}%` }}>{s}</span>
            <span className="absolute bottom-0 h-3 w-0.5 bg-[#6b6b6b]" style={{ left: `${(i * 100) / 3}%` }} />
          </Fragment>
        ))}
      </div>
      <div className="-mx-[21px] h-1 border-y border-black bg-[#111]" />
      <div className="flex h-8">
        <span className="mr-px -ml-3 h-[30px] w-[11px] shrink-0 rounded-l-full bg-[#2d8ceb]" />
        <span className="w-2/3 shrink-0 bg-[#606060]" />
        <span className="h-[30px] w-[9px] shrink-0 rounded-r-lg bg-[#2d8ceb]" />
      </div>
      <div className="-ml-[17px] h-[3px] bg-black" />
      <div className="h-1.5 border-y border-[#128a1c] bg-[#14bd20]" />
      <div className="-mx-[21px] h-0.5 bg-black" />
      <div className="-mr-[13px] flex h-[42px] items-center border-b-2 border-[#232323] bg-[linear-gradient(90deg,#383838_66%,#303030_66%)] pr-[13px]">
        <span className="h-[34px] w-2/3 bg-[#7c3a3a]" />
        <span className="mr-1 h-[34px] flex-1 bg-[#743434]" />
      </div>
      {[0, 1, 2].map(i => (
        <div key={i} className="h-11 border-b-2 border-[#242424] bg-[#262626]">
          <div className="h-full w-2/3 bg-[#343434]" />
        </div>
      ))}
      <div className="w-2/3 flex-1 bg-[#303030]" />

      <div className="absolute top-[13px] bottom-0 w-0.5 bg-[#2d8ceb]" style={{ left: `${FRAME * 100}%` }} />
      <div className="absolute top-[45px] -ml-3 text-[#2d8ceb]" style={{ left: `${FRAME * 100}%` }}>
        <Icon w={26} h={29}><path d="M1 0h24v15L16 29h-6L1 15z" /><path d="M12 14h2v15h-2z" fill="#17508c" /></Icon>
      </div>
      <div className="absolute top-[172px] -ml-1.5 flex flex-col gap-5" style={{ left: `${FRAME * 100}%` }}>
        <IBeam /><IBeam /><IBeam />
      </div>
      <span className="absolute top-[223px] -left-1.5 h-3 w-3 rounded-full bg-[#b9b9b9]" />
      <span className="absolute top-[223px] left-2/3 -ml-1.5 h-3 w-3 rounded-full bg-[#b9b9b9]" />
      <p className="absolute top-[252px] -left-4 text-5xl leading-[56px] text-[#ffb114]">0°</p>
      <p className="absolute top-[252px] left-2/3 -ml-[42px] text-5xl leading-[56px] text-[#ffb114]">360°</p>
      <Icon w={28} h={5} className="absolute bottom-0 left-3/4 -ml-1 text-[#ff6a2e]"><path d="M0 5 3 3 20 0h4l4 5z" /></Icon>
    </div>
    <Icon w={8} h={12} className="absolute top-[136px] right-0 text-[#ababab]"><path d="M8 0v12H0z" /></Icon>
  </div>
);

const Timeline = () => (
  <section className="mt-[11px] flex flex-1 flex-col bg-[#232323]">
    <div className="flex h-[60px] items-start pl-[60px] text-[29px] leading-[53px] text-[#8c8c8c]">
      <button type="button" className="pt-1">渲染队列</button>
      <div className="ml-[90px] flex items-center border-b-4 border-[#b9b9b9] text-[#bdbdbd]">
        <button type="button" aria-label="关闭" className="mr-[23px]"><Cross /></button>
        <span className="mr-[26px] h-[21px] w-[21px] bg-[#a99676]" />
        <span className="mr-[22px] text-[28px]"><span className="text-2xl">3..</span>勾画</span>
        <button type="button" aria-label="面板菜单"><Burger /></button>
      </div>
    </div>
    <div className="flex flex-1">
      <Outline />
      <Tracks />
    </div>
  </section>
);

export default function App() {
  return (
    <div className="flex min-h-screen flex-col bg-[#161616] font-['Open_Sans','Noto_Sans_CJK_SC',sans-serif]">
      <Toolbar />
      <main className="mt-[7px] flex pl-0.5">
        <EffectControls />
        <Viewer />
        <Presets />
        <SidePanels />
      </main>
      <Timeline />
    </div>
  );
}
